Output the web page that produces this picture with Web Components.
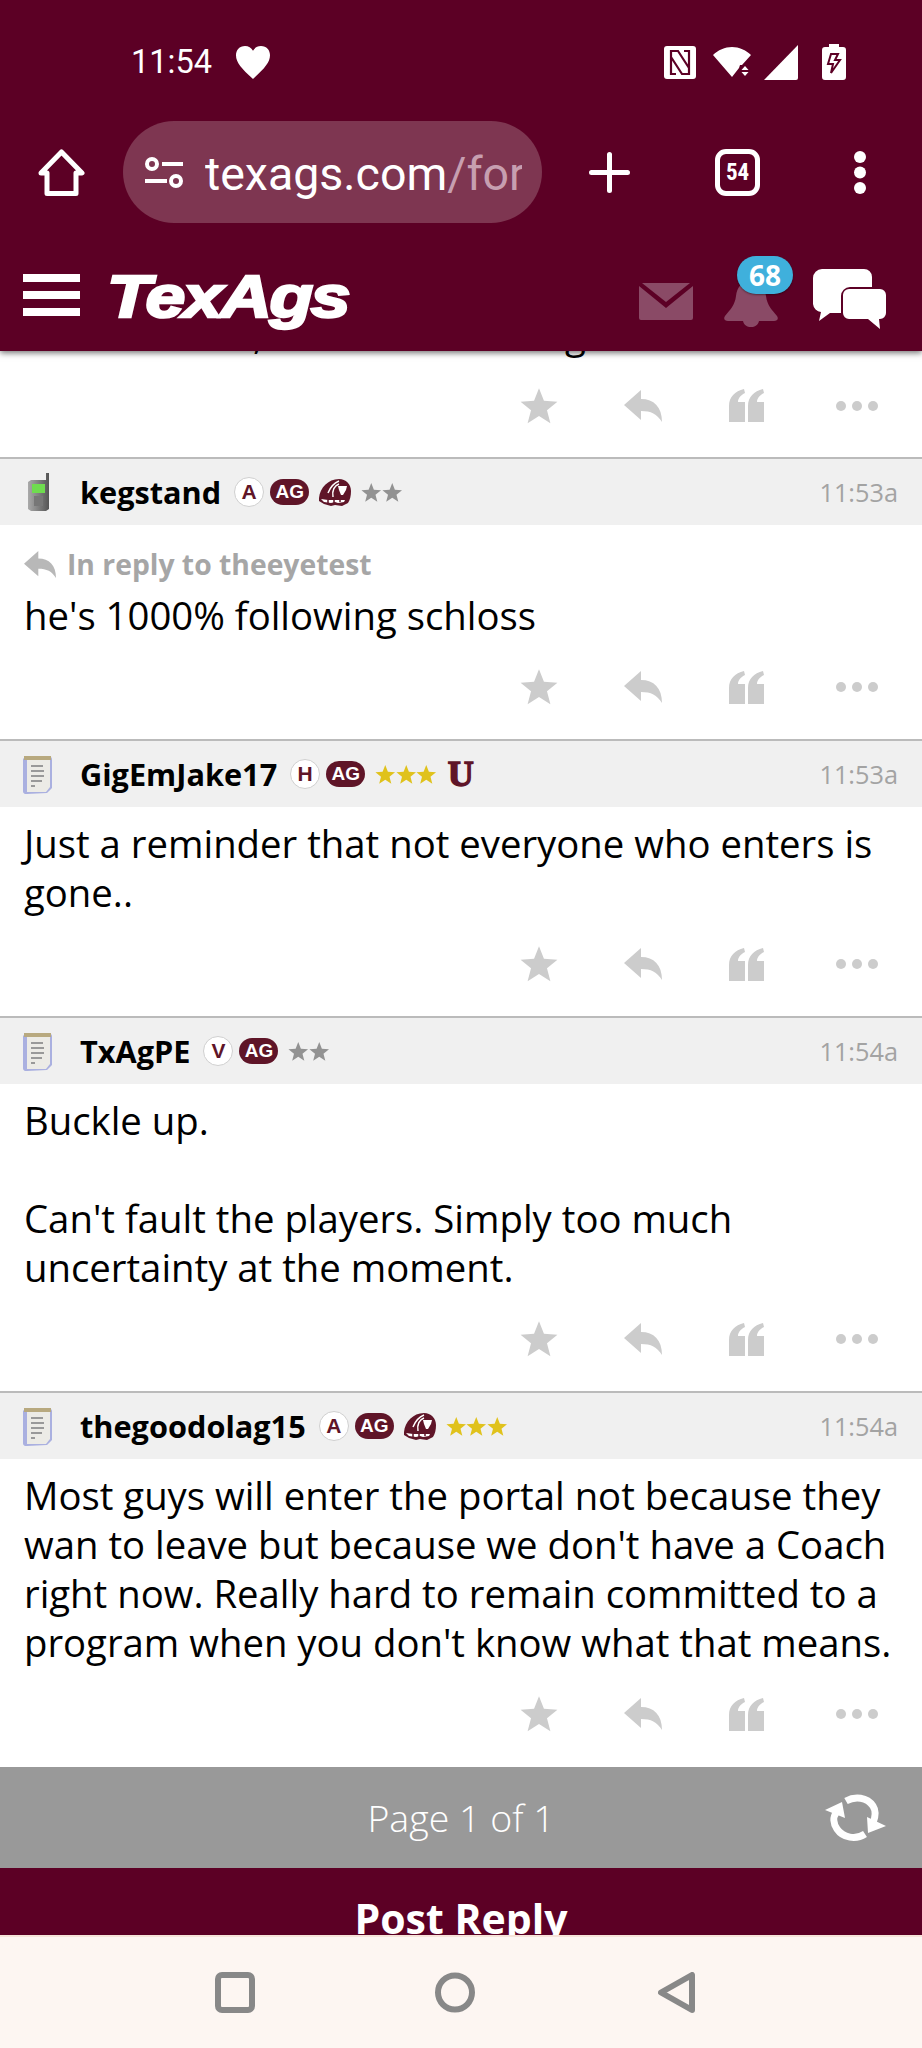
<!DOCTYPE html>
<html>
<head>
<meta charset="utf-8">
<title>TexAgs</title>
<style>
  html, body { margin: 0; padding: 0; background: #fff; }
  body { width: 922px; height: 2048px; overflow: hidden; display: flex; flex-direction: column; font-family: "Open Sans", sans-serif; }
</style>
</head>
<body>
<top-chrome>
  <status-bar></status-bar>
  <browser-bar></browser-bar>
  <site-nav></site-nav>
</top-chrome>

<post-thread>
  <forum-post partial>
    <clip-line></clip-line>
  </forum-post>
  <forum-post user="kegstand" time="11:53a" device="phone" reply="theeyetest">
    <user-badge slot="badges" letter="A"></user-badge>
    <ag-pill slot="badges"></ag-pill>
    <helmet-mark slot="badges"></helmet-mark>
    <star-row slot="badges" count="2"></star-row>
    he's 1000% following schloss
  </forum-post>
  <forum-post user="GigEmJake17" time="11:53a">
    <user-badge slot="badges" letter="H"></user-badge>
    <ag-pill slot="badges"></ag-pill>
    <star-row slot="badges" count="3" gold></star-row>
    <u-mark slot="badges"></u-mark>
    Just a reminder that not everyone who enters is gone..
  </forum-post>
  <forum-post user="TxAgPE" time="11:54a">
    <user-badge slot="badges" letter="V"></user-badge>
    <ag-pill slot="badges"></ag-pill>
    <star-row slot="badges" count="2"></star-row>
    Buckle up.<br><br>Can't fault the players. Simply too much uncertainty at the moment.
  </forum-post>
  <forum-post user="thegoodolag15" time="11:54a">
    <user-badge slot="badges" letter="A"></user-badge>
    <ag-pill slot="badges"></ag-pill>
    <helmet-mark slot="badges"></helmet-mark>
    <star-row slot="badges" count="3" gold></star-row>
    Most guys will enter the portal not because they wan to leave but because we don't have a Coach right now. Really hard to remain committed to a program when you don't know what that means.
  </forum-post>
</post-thread>

<pager-bar></pager-bar>
<reply-bar></reply-bar>
<android-nav></android-nav>

<script>
const starPath = 'M10 0l2.6 6.6 7.1.5-5.5 4.5 1.8 6.9L10 14.7 4 18.5l1.8-6.9L.3 7.1l7.1-.5z'

// plain helper, every element just sets its shadow html
function shadow(el, html) {
  el.attachShadow({ mode: 'open' })
  el.shadowRoot.innerHTML = html
}

class TopChrome extends HTMLElement {
  constructor() {
    super()
    shadow(this, `
      <style>
        :host { display: block; height: 351px; background: #5c0025; position: relative; z-index: 5; box-shadow: 0 2px 6px rgba(0,0,0,.55); flex: none; }
      </style>
      <slot></slot>`)
  }
}

class StatusBar extends HTMLElement {
  constructor() {
    super()
    shadow(this, `
      <style>
        :host { display: flex; align-items: center; height: 124px; box-sizing: border-box; padding: 0 76px 0 131px; color: #fff; font: 400 32.5px Roboto, sans-serif; }
        .time { margin-right: 24px; }
        svg { display: block; fill: #fff; }
        .left { display: flex; align-items: center; }
        .right { margin-left: auto; display: flex; align-items: center; }
      </style>
      <div class="left">
        <span class="time">11:54</span>
        <svg width="34" height="33" viewBox="2 0 30 32" preserveAspectRatio="none"><path d="M17 32C7 22 2 16 2 9 2 4 5 0 10 0c3 0 5.500 1.700 7 4.500C18.500 1.700 21 0 24 0c5 0 8 4 8 9 0 7-5 13-15 23z"/></svg>
      </div>
      <div class="right">
        <svg width="32" height="33" viewBox="0 0 32 33" style="margin-right:17px"><path d="M3 0h26a3 3 0 0 1 3 3v27a3 3 0 0 1-3 3H3a3 3 0 0 1-3-3V3a3 3 0 0 1 3-3z"/><path d="M12 28H7V5h7l11 17M20 5h5v23h-7L7 11" fill="none" stroke="#5c0025" stroke-width="2.200"/></svg>
        <svg width="40" height="30" viewBox="0 0 40 30" style="margin-right:11px"><path d="M0 8C5 3 12 0 19 0s14 3 19 8l-9 10-2 0-1 3-7 9z"/><path d="M32 19l3.500 4h-7zM28.500 25h7L32 29z"/></svg>
        <svg width="35" height="35" viewBox="0 0 35 35" style="margin-right:23px"><path d="M34 0v33a2 2 0 0 1-2 2H0z"/></svg>
        <svg width="24" height="36" viewBox="0 0 24 36"><path d="M7 0h10v3h4a3 3 0 0 1 3 3v27a3 3 0 0 1-3 3H3a3 3 0 0 1-3-3V6a3 3 0 0 1 3-3h4z"/><path d="M9 10l-3 10h5l-2 9 9-13h-5l3-6z" stroke="#5c0025" stroke-width="2" fill="#fff"/></svg>
      </div>`)
  }
}

class BrowserBar extends HTMLElement {
  constructor() {
    super()
    shadow(this, `
      <style>
        :host { display: flex; align-items: center; height: 102px; margin-top: -3px; box-sizing: border-box; padding-left: 38px; color: #fff; }
        svg { display: block; flex: none; }
        .pill { width: 419px; height: 102px; margin-left: 38px; border-radius: 51px; background: #7e3651; display: flex; align-items: center; box-sizing: border-box; padding-left: 22px; flex: none; }
        .url { width: 317px; margin-left: 22px; padding-top: 4px; overflow: hidden; white-space: nowrap; font: 400 46.5px Roboto, sans-serif; }
        .url i { font-style: normal; color: #c79fb0; }
        .plus { margin-left: 47px; }
        .tabs { margin-left: 85px; width: 45px; height: 47px; box-sizing: border-box; border: 5px solid #fff; border-radius: 11px; display: flex; align-items: center; justify-content: center; font: 700 23px "Roboto Condensed", Roboto, sans-serif; flex: none; }
        .more { margin-left: 94px; }
      </style>
      <svg width="47" height="47" viewBox="0 0 47 47" fill="none" stroke="#fff" stroke-width="5" stroke-linejoin="round"><path d="M23.500 3L44 24h-6v20.500H9V24H3z"/></svg>
      <div class="pill">
        <svg width="38" height="31" viewBox="0 0 38 31" fill="none" stroke="#fff" stroke-width="4"><circle cx="7" cy="7" r="5"/><path d="M17 7h21M0 24h22"/><circle cx="31" cy="24" r="5"/></svg>
        <div class="url">texags.com<i>/for</i></div>
      </div>
      <svg class="plus" width="41" height="41" viewBox="0 0 41 41" stroke="#fff" stroke-width="5" stroke-linecap="round"><path d="M20.500 2.500v36M2.500 20.500h36"/></svg>
      <div class="tabs">54</div>
      <svg class="more" width="12" height="43" viewBox="0 0 12 43" fill="#fff"><circle cx="6" cy="6" r="6"/><circle cx="6" cy="21.500" r="6"/><circle cx="6" cy="37" r="6"/></svg>`)
  }
}

class SiteNav extends HTMLElement {
  constructor() {
    super()
    shadow(this, `
      <style>
        :host { display: flex; align-items: center; height: 128px; box-sizing: border-box; padding: 20px 0 0 23px; }
        svg { display: block; flex: none; }
        .burger { display: flex; flex-direction: column; gap: 9px; width: 57px; margin-top: -4px; flex: none; }
        .burger b { display: block; height: 8px; background: #fff; }
        .logo { margin-left: 27px; width: 242px; flex: none; font: italic 700 60px/1 "Liberation Sans", sans-serif; color: #fff; -webkit-text-stroke: 2.5px #fff; letter-spacing: -2px; transform: scaleX(1.19); transform-origin: left center; white-space: nowrap; }
        .mail { margin-left: 290px; margin-top: 8px; }
        .bell { margin-left: 31px; position: relative; margin-top: 14px; }
        .count { position: absolute; left: 13px; top: -25px; width: 56px; height: 38px; border-radius: 19px; background: #3fb0dc; color: #fff; font: 700 28px/38px "Open Sans", sans-serif; text-align: center; box-shadow: 0 1px 2px rgba(0,0,0,.4); }
        .chat { margin-left: 35px; margin-top: 4px; }
      </style>
      <div class="burger"><b></b><b></b><b></b></div>
      <div class="logo">TexAgs</div>
      <svg class="mail" width="54" height="37" viewBox="0 0 54 37"><path fill="#8a4a66" d="M0 3l27 22L54 3v32a2 2 0 0 1-2 2H2a2 2 0 0 1-2-2z"/><path fill="#8a4a66" d="M3 0h48L27 19z"/></svg>
      <div class="bell">
        <svg width="54" height="46" viewBox="0 0 54 46"><path fill="#8a4a66" d="M27 0c10 0 14 7 15 15 1 9 6 14 11 20 2 3 0 5-3 5H35c-1 4-4 6-8 6s-7-2-8-6H4c-3 0-5-2-3-5 5-6 10-11 11-20C13 7 17 0 27 0z"/></svg>
        <div class="count">68</div>
      </div>
      <svg class="chat" width="73" height="60" viewBox="0 0 73 60"><path fill="#fff" d="M9 0h42a8 8 0 0 1 8 8v10H37a9 9 0 0 0-9 9v17H17L6 52l2-9a9 9 0 0 1-8-8V9a9 9 0 0 1 9-9z"/><path fill="#fff" d="M36 20h31a6 6 0 0 1 6 6v18a6 6 0 0 1-6 6h-1l1 10-12-10H36a6 6 0 0 1-6-6V26a6 6 0 0 1 6-6z"/></svg>`)
  }
}

class PostThread extends HTMLElement {
  constructor() {
    super()
    shadow(this, `
      <style>
        :host { display: block; flex: 1 1 0; min-height: 0; overflow: hidden; }
        .scroll { margin-top: -41px; }
      </style>
      <div class="scroll"><slot></slot></div>`)
  }
}

class ForumPost extends HTMLElement {
  constructor() {
    super()
    const user = this.getAttribute('user')
    const head = user ? `
      <div class="head">
        <span class="dev">${this.getAttribute('device') === 'phone' ? phoneIcon() : noteIcon()}</span>
        <span class="name">${user}</span>
        <slot name="badges"></slot>
        <span class="time">${this.getAttribute('time')}</span>
      </div>` : ''
    const reply = this.getAttribute('reply')
    shadow(this, `
      <style>
        :host { display: block; color: #000; }
        .head { display: flex; align-items: center; height: 66px; background: #f0f0f0; border-top: 2px solid #bbb; padding: 0 24px 0 0; }
        .dev { width: 80px; flex: none; display: flex; padding-left: 23px; box-sizing: border-box; }
        .name { font: 700 30.7px "Open Sans", sans-serif; margin-right: 13px; color: #000; }
        .time { margin-left: auto; font: 400 25.3px "Open Sans", sans-serif; color: #a3a3a3; }
        .body { padding: 12px 24px 0; font: 400 38.3px/49px "Open Sans", sans-serif; }
        .reply { display: flex; align-items: center; height: 54px; color: #a6a6a6; font: 700 28.3px "Open Sans", sans-serif; gap: 11px; }
        .reply svg { fill: #b8b8b8; display: block; }
        .acts { display: flex; align-items: center; height: 99px; box-sizing: border-box; padding-bottom: 5px; }
        .acts svg { display: block; fill: #ccc; flex: none; }
        :host([partial]) .body { padding-top: 0; }
        :host([partial]) .acts { height: 98px; }
      </style>
      ${head}
      <div class="body">
        ${reply ? `<div class="reply"><svg width="32" height="27" viewBox="0 0 38 32"><path d="M0 15L17 0v9c13 0 21 8 21 23-5-8-11-11-21-11v9z"/></svg><span>In reply to ${reply}</span></div>` : ''}
        <slot></slot>
      </div>
      <div class="acts">
        <svg style="margin-left:520px" width="38" height="36" viewBox="0 0 20 18.800"><path d="${starPath}"/></svg>
        <svg style="margin-left:66px" width="38" height="32" viewBox="0 0 38 32"><path d="M0 15L17 0v9c13 0 21 8 21 23-5-8-11-11-21-11v9z"/></svg>
        <svg style="margin-left:67px" width="35" height="33" viewBox="0 0 35 33"><path d="M0 33V17C0 8 6 2 15 0l1 4c-4 2-7 5-7 9h7v20zM19 33V17c0-9 6-15 15-17l1 4c-4 2-7 5-7 9h7v20z"/></svg>
        <svg style="margin-left:72px" width="42" height="10" viewBox="0 0 42 10"><circle cx="5" cy="5" r="5"/><circle cx="21" cy="5" r="5"/><circle cx="37" cy="5" r="5"/></svg>
      </div>`)
  }
}

function phoneIcon() {
  return `<svg width="24" height="38" viewBox="0 0 24 38" style="margin-left:4px;display:block"><defs><linearGradient id="p" x1="0" x2="1"><stop offset="0" stop-color="#aaa"/><stop offset="1" stop-color="#555"/></linearGradient></defs><path d="M19 0h3v36l-3 2H4l-3-2V9l3-2h15z" fill="url(#p)"/><rect x="5" y="11" width="13" height="9" fill="#6fdc4f"/><rect x="7" y="23" width="9" height="10" fill="#777"/></svg>`
}

function noteIcon() {
  return `<svg width="29" height="39" viewBox="0 0 29 39" style="display:block"><path d="M2 2h25a2 2 0 0 1 2 2v29l-5 5-20 1a3 3 0 0 1-4-3V4z" fill="#aab0e0"/><path d="M4 3h23v29l-4 5H4z" fill="#ecebe6"/><path d="M1 1h27v4H1z" fill="#b8a97f"/><path d="M8 11h12M8 16h13M8 21h13M8 26h11M8 31h4" stroke="#999" stroke-width="1.800"/></svg>`
}

class UserBadge extends HTMLElement {
  constructor() {
    super()
    shadow(this, `
      <style>
        :host { display: flex; align-items: center; justify-content: center; width: 30px; height: 30px; box-sizing: border-box; border: 1.5px solid #d0d0d0; border-radius: 50%; background: #fff; color: #5f1528; font: 700 21px "Liberation Sans", sans-serif; margin-right: 6px; flex: none; }
      </style>
      ${this.getAttribute('letter')}`)
  }
}

class AgPill extends HTMLElement {
  constructor() {
    super()
    shadow(this, `
      <style>
        :host { display: flex; align-items: center; justify-content: center; width: 39px; height: 26px; border-radius: 13px; background: #5f1528; color: #fff; font: 700 19px "Liberation Sans", sans-serif; margin-right: 10px; flex: none; }
      </style>
      AG`)
  }
}

class HelmetMark extends HTMLElement {
  constructor() {
    super()
    shadow(this, `
      <style>
        :host { display: block; width: 32px; height: 27px; margin-right: 10px; flex: none; }
        svg { display: block; }
      </style>
      <svg width="32" height="27" viewBox="0 0 32 27"><path fill="#5f1528" d="M0 19C1 9 9 0 20 0c7 0 12 5 12 12 0 5-1 9-3 12l-6 3-7-1-4 1-7-2-5-3z"/><path d="M9 14C11 9 15 4 20 2M14 18c-1-6 1-11 6-13" stroke="#fff" stroke-width="1.500" fill="none"/><path fill="#fff" d="M19 7h9l-1 4-3 5-2 0-2-5zM2 20l7 1h17l-1 2-6 1-3-1-4 1-7-1z"/><path d="M9 21v3M15 21v3M21 21v2" stroke="#5f1528" stroke-width="1.500"/></svg>`)
  }
}

class StarRow extends HTMLElement {
  constructor() {
    super()
    const n = +this.getAttribute('count')
    const c = this.hasAttribute('gold') ? '#e0c21c' : '#929292'
    const one = `<svg width="20.5" height="19" viewBox="0 0 20 18.800"><path d="${starPath}"/></svg>`
    shadow(this, `
      <style>
        :host { display: flex; margin-right: 11px; flex: none; }
        svg { display: block; fill: ${c}; }
      </style>
      ${one.repeat(n)}`)
  }
}

class UMark extends HTMLElement {
  constructor() {
    super()
    shadow(this, `
      <style>
        :host { display: block; color: #5f1528; font: 700 36px/1 "Liberation Serif", serif; -webkit-text-stroke: 1.5px #5f1528; }
      </style>
      U`)
  }
}

class ClipLine extends HTMLElement {
  constructor() {
    super()
    // only the bottoms of this line stick out under the header
    shadow(this, `
      <style>
        :host { display: flex; height: 49px; font: 400 38.3px/49px "Open Sans", sans-serif; }
        .a { margin-left: 229px; }
        .b { margin-left: 302px; }
      </style>
      <span class="a">,</span><span class="b">g</span>`)
  }
}

class PagerBar extends HTMLElement {
  constructor() {
    super()
    shadow(this, `
      <style>
        :host { display: flex; align-items: center; justify-content: center; height: 101px; flex: none; background: #999; color: #fff; font: 300 37.5px "Open Sans", sans-serif; position: relative; }
        svg { position: absolute; left: 815px; top: 18px; display: block; }
      </style>
      <span>Page 1 of 1</span>
      <svg width="80" height="65" viewBox="0 0 80 65" fill="none">
        <path d="M31 16C40 11 52 12 58 21c4 6 2 12 0 17M50 49c-9 6-22 4-28-5-4-6-4-12-1-16" stroke="#fff" stroke-width="7"/>
        <path fill="#fff" d="M52 32l19 9-18 7zM10 25l17-8 3 16z"/>
      </svg>`)
  }
}

class ReplyBar extends HTMLElement {
  constructor() {
    super()
    shadow(this, `
      <style>
        :host { display: block; height: 67px; flex: none; overflow: hidden; background: #5c0025; color: #fff; text-align: center; font: 700 41px/49px "Open Sans", sans-serif; }
        div { padding-top: 26px; }
      </style>
      <div>Post Reply</div>`)
  }
}

class AndroidNav extends HTMLElement {
  constructor() {
    super()
    shadow(this, `
      <style>
        :host { display: flex; align-items: center; height: 113px; flex: none; box-sizing: border-box; background: #fdf6f2; border-top: 2px solid #f6e4da; padding-left: 215px; }
        svg { display: block; fill: none; stroke: #888; stroke-width: 6; stroke-linejoin: round; }
      </style>
      <svg width="40" height="41" viewBox="0 0 40 41"><rect x="3" y="3" width="34" height="35" rx="4"/></svg>
      <svg style="margin-left:180px" width="40" height="41" viewBox="0 0 40 41"><circle cx="20" cy="20.500" r="17"/></svg>
      <svg style="margin-left:183px" width="37" height="41" viewBox="0 0 37 41"><path d="M34 3v35L3 20.500z"/></svg>`)
  }
}

customElements.define('top-chrome', TopChrome)
customElements.define('status-bar', StatusBar)
customElements.define('browser-bar', BrowserBar)
customElements.define('site-nav', SiteNav)
customElements.define('post-thread', PostThread)
customElements.define('forum-post', ForumPost)
customElements.define('user-badge', UserBadge)
customElements.define('ag-pill', AgPill)
customElements.define('helmet-mark', HelmetMark)
customElements.define('star-row', StarRow)
customElements.define('u-mark', UMark)
customElements.define('clip-line', ClipLine)
customElements.define('pager-bar', PagerBar)
customElements.define('reply-bar', ReplyBar)
customElements.define('android-nav', AndroidNav)
</script>
</body>
</html>
